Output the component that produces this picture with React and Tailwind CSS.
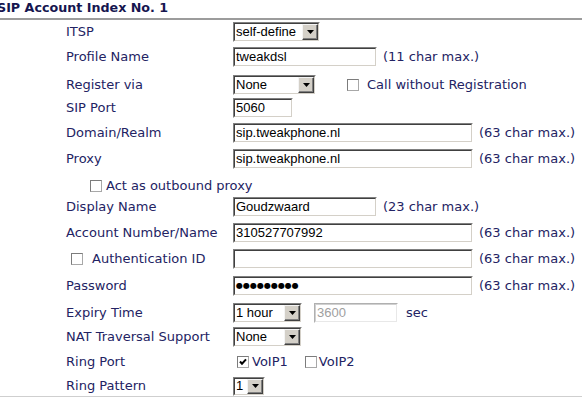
const lbl = "font-['DejaVu_Sans',Verdana,sans-serif] text-[13px] text-[#232363] whitespace-nowrap";
const face = "font-['Liberation_Sans',Arial,sans-serif] text-[13px] whitespace-nowrap";

function Inset({ w, h = 'h-[20px]', dim, children }) {
  const outer = dim
    ? 'border-t-[#b0b0b0] border-l-[#b0b0b0] border-r-white border-b-white'
    : 'border-t-[#808080] border-l-[#808080] border-r-white border-b-white';
  const inner = dim
    ? 'border-t-[#d0d0d0] border-l-[#d0d0d0] border-r-[#e8e8e8] border-b-[#e8e8e8]'
    : 'border-t-[#404040] border-l-[#404040] border-r-[#d4d0c8] border-b-[#d4d0c8]';
  return (
    <div className={`${w} ${h} shrink-0 border ${outer}`}>
      <div className={`h-full w-full border ${inner} bg-white flex items-center overflow-hidden`}>
        {children}
      </div>
    </div>
  );
}

function Field({ w, value, dim }) {
  return (
    <Inset w={w} dim={dim}>
      <span className={`${face} pl-[1px] ${dim ? 'text-[#a0a0a0]' : 'text-black'}`}>{value}</span>
    </Inset>
  );
}

function Select({ w, h, value }) {
  return (
    <Inset w={w} h={h}>
      <span className={`${face} text-black pl-[1px] flex-1`}>{value}</span>
      <div className="h-full w-[16px] shrink-0 bg-[#d4d0c8] border border-t-[#f4f4f4] border-l-[#f4f4f4] border-r-[#404040] border-b-[#404040] shadow-[inset_-1px_-1px_0_#808080] flex items-center justify-center">
        <svg width="7" height="4" viewBox="0 0 7 4"><path d="M0 0h7L3.5 4z" fill="#000" /></svg>
      </div>
    </Inset>
  );
}

function Check({ on, cls = '' }) {
  return (
    <span className={`flex w-[12px] h-[12px] shrink-0 border border-[#a8a8a8] border-t-[#7c7c7c] border-l-[#7c7c7c] bg-white items-center justify-center ${cls}`}>
      {on && (
        <svg width="8" height="8" viewBox="0 0 8 8">
          <path d="M1 3.5l2 2.2 4-4.4" stroke="#000" strokeWidth="2" fill="none" />
        </svg>
      )}
    </span>
  );
}

function Hint({ children }) {
  return <span className={`${lbl} ml-[6px]`}>{children}</span>;
}

function Row({ mt, label, children }) {
  return (
    <div className={`flex items-center h-[20px] ${mt}`}>
      <div className={`w-[233px] pl-[66px] shrink-0 ${lbl}`}>{label}</div>
      <div className="flex items-center">{children}</div>
    </div>
  );
}

export default function App() {
  return (
    <div className="w-[582px] h-[397px] overflow-hidden bg-white">
      <div className="h-[18px] leading-[16px] -ml-[3px] font-bold text-[12.7px] text-[#16164f] font-['DejaVu_Sans',Verdana,sans-serif] whitespace-nowrap">
        SIP Account Index No. 1
      </div>
      <div className="h-[2px] bg-[#9c9c9c]" />

      <Row mt="mt-[2px]" label="ITSP">
        <Select w="w-[87px]" value="self-define" />
      </Row>
      <Row mt="mt-[5px]" label="Profile Name">
        <Field w="w-[144px]" value="tweakdsl" />
        <Hint>(11 char max.)</Hint>
      </Row>
      <Row mt="mt-[8px]" label="Register via">
        <Select w="w-[83px]" value="None" />
        <Check cls="ml-[31px]" />
        <span className={`${lbl} ml-[8px]`}>Call without Registration</span>
      </Row>
      <Row mt="mt-[3px]" label="SIP Port">
        <Field w="w-[60px]" value="5060" />
      </Row>
      <Row mt="mt-[5px]" label="Domain/Realm">
        <Field w="w-[240px]" value="sip.tweakphone.nl" />
        <Hint>(63 char max.)</Hint>
      </Row>
      <Row mt="mt-[6px]" label="Proxy">
        <Field w="w-[240px]" value="sip.tweakphone.nl" />
        <Hint>(63 char max.)</Hint>
      </Row>
      <div className="flex items-center h-[20px] mt-[7px] pl-[90px]">
        <Check />
        <span className={`${lbl} ml-[4px]`}>Act as outbound proxy</span>
      </div>
      <Row mt="mt-[1px]" label="Display Name">
        <Field w="w-[144px]" value="Goudzwaard" />
        <Hint>(23 char max.)</Hint>
      </Row>
      <Row mt="mt-[6px]" label="Account Number/Name">
        <Field w="w-[240px]" value="310527707992" />
        <Hint>(63 char max.)</Hint>
      </Row>
      <div className="flex items-center h-[20px] mt-[6px]">
        <div className={`w-[233px] pl-[71px] shrink-0 flex items-center ${lbl}`}>
          <Check />
          <span className="ml-[9px]">Authentication ID</span>
        </div>
        <Field w="w-[240px]" value="" />
        <Hint>(63 char max.)</Hint>
      </div>
      <Row mt="mt-[7px]" label="Password">
        <Inset w="w-[240px]">
          <span className="font-['DejaVu_Sans',sans-serif] text-[8px] text-black pl-[1px] whitespace-nowrap">●●●●●●●●●</span>
        </Inset>
        <Hint>(63 char max.)</Hint>
      </Row>
      <Row mt="mt-[7px]" label="Expiry Time">
        <Select w="w-[69px]" value="1 hour" />
        <div className="ml-[12px]">
          <Field w="w-[84px]" value="3600" dim />
        </div>
        <span className={`${lbl} ml-[8px]`}>sec</span>
      </Row>
      <Row mt="mt-[4px]" label="NAT Traversal Support">
        <Select w="w-[69px]" value="None" />
      </Row>
      <Row mt="mt-[5px]" label="Ring Port">
        <Check on cls="ml-[4px]" />
        <span className={`${lbl} ml-[3px]`}>VoIP1</span>
        <Check cls="ml-[17px]" />
        <span className={`${lbl} ml-[2px]`}>VoIP2</span>
      </Row>
      <Row mt="mt-[4px]" label="Ring Pattern">
        <Select w="w-[32px]" h="h-[19px]" value="1" />
      </Row>
      <div className="h-[2px] bg-[#cfcfcf]" />
    </div>
  );
}
